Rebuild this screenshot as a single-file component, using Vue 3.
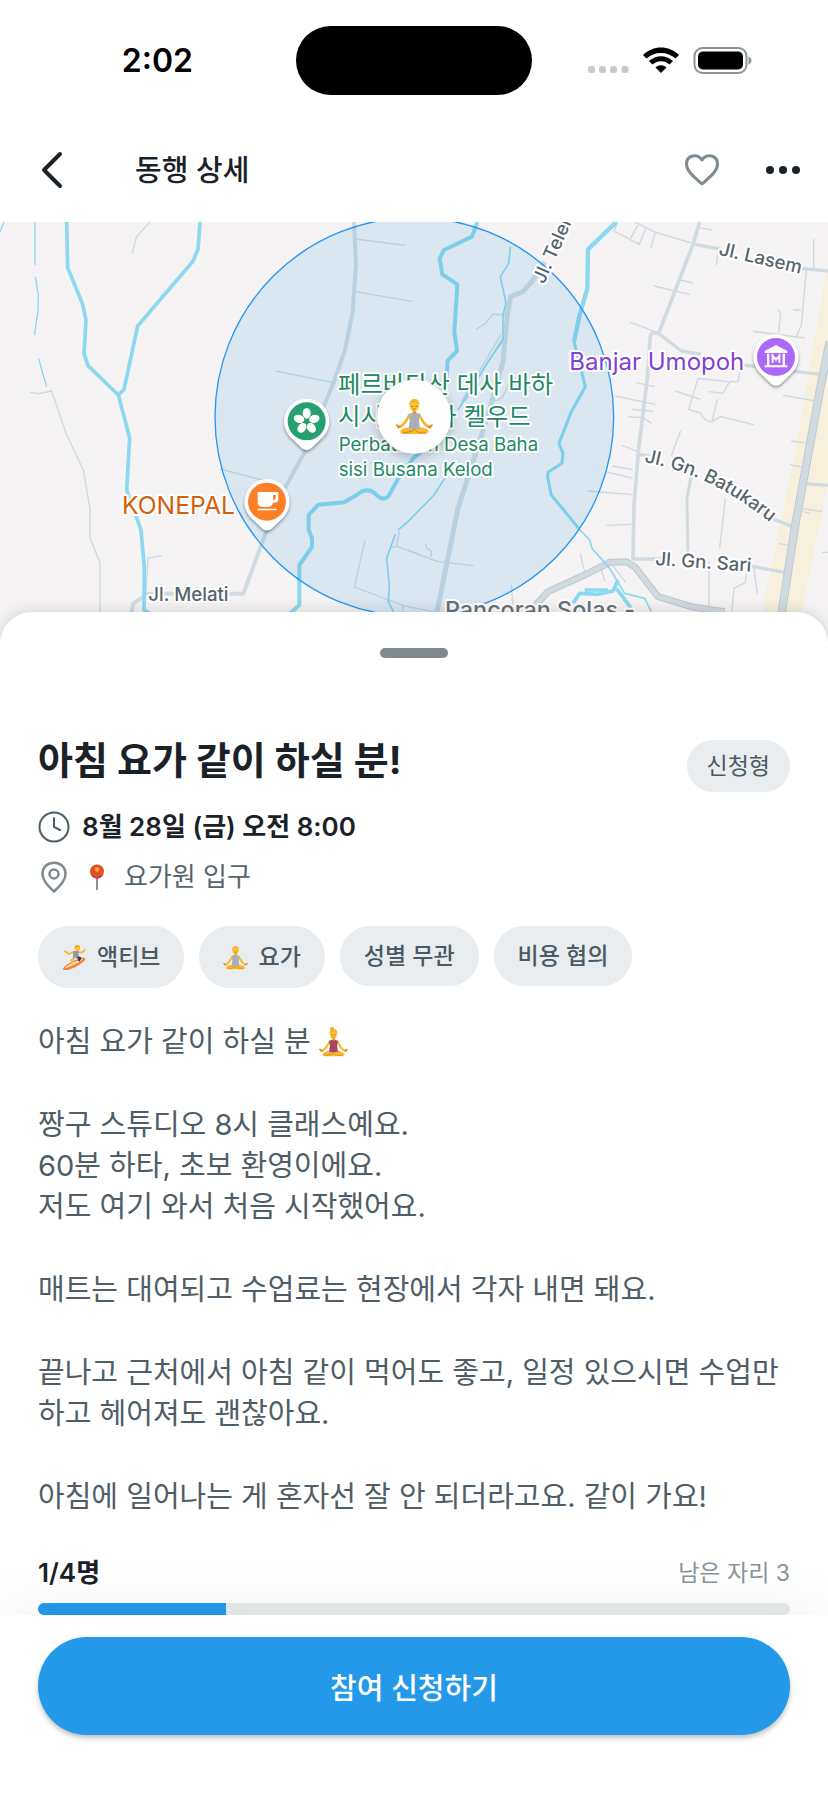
<template>
  <div class="page">
    <svg class="sprite" aria-hidden="true">
      <symbol id="yoga" viewBox="0 0 36 36">
        <path d="M13.500 16.500 C11 20 10 24 6 27 L2.500 28.500 M22.500 16.500 C25 20 26 24 30 27 L33.500 28.500" fill="none" stroke="#f7b62d" stroke-width="2.600" stroke-linecap="round" stroke-linejoin="round" />
        <path d="M1 26.500 L4 28.500 M35 26.500 L32 28.500" stroke="#d9822b" stroke-width="1.600" stroke-linecap="round" />
        <path d="M7 30 C11 28 14 28.500 18 30 C22 28.500 25 28 29 30 C33 31.500 32 35 28 35 H8 C4 35 3 31.500 7 30Z" fill="#f7b62d" />
        <path d="M7 34 C13 33.500 16 32.500 19 30.500 M29 34 C25 34 22 33.500 20 32.500" fill="none" stroke="#d88a18" stroke-width="1" />
        <rect x="16.400" y="11" width="3.400" height="6" fill="#e59a1c" />
        <path d="M12.500 16 L16 14.500 Q18 17 20 14.500 L23.500 16 L22.500 22 L23.500 29.500 Q18 31 12.500 29.500 L13.500 22Z" fill="currentColor" />
        <ellipse cx="18" cy="7.600" rx="4.600" ry="5.800" fill="#fbc534" />
        <path d="M13.200 7 C12.500 0 23.500 -1 22.800 7 C21.500 4 16 3 13.200 7Z" fill="#f7b03a" />
        <path d="M15 8.500h2 M19 8.500h2" stroke="#8a5a12" stroke-width=".8" />
        <path d="M16.800 11h2.400" stroke="#c5481e" stroke-width=".9" />
      </symbol>
      <symbol id="surf" viewBox="0 0 36 36">
        <ellipse cx="17.500" cy="27.500" rx="18" ry="4.600" transform="rotate(-27 17.500 27.500)" fill="#f58234" />
        <ellipse cx="17" cy="26.800" rx="14" ry="1.600" transform="rotate(-27 17 26.800)" fill="#fde0c4" />
        <path d="M18 18 L14 22 L14 27" fill="none" stroke="#f7b62d" stroke-width="3" stroke-linejoin="round" />
        <path d="M21 17 L26 19 L24 23" fill="none" stroke="#333b44" stroke-width="3.400" stroke-linejoin="round" />
        <path d="M17 10 L10 13 L4 9 M23 10 L29 11 L33 7" fill="none" stroke="#f7b62d" stroke-width="2.600" stroke-linecap="round" stroke-linejoin="round" />
        <path d="M16 9 L24 8 L24 17 L16 19Z" fill="#8f9aa6" />
        <circle cx="22" cy="4.500" r="4" fill="#fbc534" />
        <path d="M18 4 C18 -1 26 -1 26 4 C24 2 21 2 18 4Z" fill="#e79a20" />
      </symbol>
      <symbol id="map-pin" viewBox="-75 -75 150 175">
        <path d="M-68 0 A68 68 0 1 1 68 0 C68 25 55 42 42 54 L14 81 Q0 92 -14 81 L-42 54 C-55 42 -68 25 -68 0Z" fill="#fff" />
        <circle r="57" fill="currentColor" />
      </symbol>
    </svg>

    <div class="status">
      <span class="clock">2:02</span>
      <span class="island"></span>
      <svg class="signals" viewBox="0 0 164 28" aria-hidden="true">
        <g fill="#c5cbce">
          <rect x="0" y="19" width="7" height="7" rx="2.500" />
          <rect x="11" y="19" width="7" height="7" rx="2.500" />
          <rect x="22" y="19" width="7" height="7" rx="2.500" />
          <rect x="33.500" y="19" width="7" height="7" rx="2.500" />
        </g>
        <path d="M55 8 C65 -2 81 -2 91 8 L87.500 11.500 C80 4 66 4 58.500 11.500Z" />
        <path d="M61 14 C68 7.500 78 7.500 85 14 L81.500 17.500 C77 13 69 13 64.500 17.500Z" />
        <path d="M67.500 20.500 C70.500 17.500 75.500 17.500 78.500 20.500 L73 26Z" />
        <rect x="106.500" y="1" width="52" height="25" rx="8" fill="none" stroke="#8b9499" stroke-width="2" />
        <rect x="110" y="4.500" width="45" height="18" rx="5" />
        <path d="M160.500 9.500 C164.500 11 164.500 16 160.500 17.500Z" fill="#8b9499" />
      </svg>
    </div>

    <header class="topbar">
      <button class="icon-btn" aria-label="뒤로">
        <svg width="24" height="40" viewBox="0 0 24 40"><path d="M20 4 L4 20 L20 36" fill="none" stroke="#1a2228" stroke-width="4" stroke-linecap="round" stroke-linejoin="round" /></svg>
      </button>
      <h1 class="topbar-title">동행 상세</h1>
      <div class="actions">
        <button class="icon-btn" aria-label="찜하기">
          <svg width="36" height="34" viewBox="0 0 36 34"><path d="M18 31 C9 23 2.500 18 2.500 11 C2.500 2.500 13 -.5 18 7 C23 -.5 33.500 2.500 33.500 11 C33.500 18 27 23 18 31Z" fill="none" stroke="#7f8a91" stroke-width="3" stroke-linejoin="round" /></svg>
        </button>
        <button class="icon-btn" aria-label="더보기">
          <svg width="36" height="10" viewBox="0 0 36 10" fill="#1a2228"><circle cx="5" cy="5" r="4" /><circle cx="18" cy="5" r="4" /><circle cx="31" cy="5" r="4" /></svg>
        </button>
      </div>
    </header>

    <svg class="map" viewBox="0 0 2484 1290" preserveAspectRatio="xMidYMin slice" role="img" aria-label="모임 장소 지도">
      <rect width="2484" height="1290" fill="#f5f3f4" />

      <!-- west half -->
      <g transform="translate(0 -21)" fill="none" stroke-linejoin="round">
        <g stroke="#ccd9e0" stroke-width="4">
          <path d="M450 21 L409 66 L397 116" />
          <path d="M90 532 L118 536 L155 528 L198 655 L250 765 L270 880 V968 L300 1043 V1200" />
          <path d="M1065 72 L1216 91 M1065 230 L1237 259 M827 468 L1000 503 M660 762 L800 798" />
          <path d="M438 1135 L444 1030 L486 1021" />
          <path d="M1095 976 L1063 1116 L1210 1172 L1400 1210 M1175 996 L1190 994 L1260 1018 M1190 994 L1198 948" />
          <path d="M1208 1172 V1210" />
        </g>
        <path d="M1062 21 L1068 150 L1058 290 L1035 405 L1000 505 L920 700 L860 810 L795 960 L730 1136 H445 L400 1165 L388 1220" stroke="#d0dae1" stroke-width="12" />
        <g stroke="#8bd8f0">
          <path d="M200 21 L203 158 L247 265 L258 315 L252 416 L264 452 L355 540 L372 523 L413 333 L578 140 L594 103 L600 21" stroke-width="11" />
          <path d="M355 540 L389 668 L380 826 L423 945 L433 1060 L432 1185 L450 1195" stroke-width="11" />
          <path d="M12 21 L0 50 M105 21 V150 M106 185 L115 240 L114 290 L108 325 L104 360 M116 430 L128 475 L140 515" stroke-width="4" />
          <path d="M1330 650 L1240 730 L1195 790 L1165 845 Q1145 860 1125 835 Q1100 815 1070 840 L1032 862 L955 869 L926 900 V945 L936 970 V996 L898 1050 V1170 L865 1200" stroke-width="12" />
          <path d="M1186 958 L1160 1030 L1168 1110 L1165 1160 L1180 1190" stroke-width="5" />
        </g>
      </g>

      <!-- east half -->
      <g transform="translate(1224 -21)" fill="none" stroke-linejoin="round">
        <path d="M1254 175 H1310 V560 L1180 1195 L1190 1320 H1060 L1070 1150 L1160 720Z" fill="#f6f0dd" />
        <g stroke="#ccd9e0" stroke-width="4">
          <path d="M630 21 L618 48 L694 88 L714 38 M668 70 L690 30 M680 21 L742 52 L850 84 M742 52 L729 98 M872 38 L911 45" />
          <path d="M818 195 L854 204 M738 213 L847 239 M667 322 L755 355 M1217 72 V165 M1195 165 L1180 330 L1165 365 M1155 285 H1180 M1035 349 L1190 369 M1110 283 L1118 295 L1112 353 M925 150 L930 110" />
          <path d="M1000 450 L990 500 L965 500 L945 535 L903 530 M960 500 L870 490 L842 584 L878 594 Q888 620 912 620 L938 605 L1037 629 M912 620 L928 553 M802 528 L877 553" />
          <path d="M686 503 L740 515 M620 543 L742 568 M672 583 L735 588 M660 605 L705 608 L730 625 M640 690 L690 710 M612 753 L675 764 M598 771 L675 790 M538 828 L675 839 M595 931 L670 928" />
          <path d="M818 647 L790 722 M952 850 L935 1000 M903 1040 V1200 M970 1200 L978 1120 L1012 1102 L1018 1050 M1038 1060 L1048 1136 M1125 541 L1225 558 M1150 678 L1205 686 M1145 749 L1190 758 M1185 881 L1242 889 M1185 890 L1206 895 M1113 986 L1150 992 M1243 1012 H1270" />
          <path d="M205 342 L233 325 L255 297 L290 300 M0 1007 L90 1040 L197 1052 M52 988 L56 1000 L70 1008 V1026 M310 1110 L315 1170 M518 1015 L522 1040 L530 1070 M575 1045 L590 1098 M605 1040 L653 1102" />
          <path d="M278 360 L160 560 M283 370 L170 560 M245 555 Q285 570 303 500" />
        </g>
        <g stroke="#d0dae1">
          <path d="M410 140 L375 195 L345 230 L308 245 L298 300 L285 440 L240 600 L150 880 L85 1200" stroke-width="15" />
          <path d="M875 21 L855 88 L752 355 L735 352 L727 362 L718 490 L692 700 L678 870 L675 1035" stroke-width="11" />
          <path d="M752 355 L820 408 L880 418 M860 88 L935 102 M1175 160 L1260 168 M1005 450 L1235 478 M690 718 L725 722 M1190 806 L1260 811 M1060 898 L1160 937 M675 1032 H760 M1020 1052 L1130 1072" stroke-width="10" />
          <path d="M850 780 L837 850 L840 1020" stroke-width="9" />
          <path d="M370 1185 L420 1130 L530 1080 L605 1042 L655 1040 L680 1055 L750 1145 L850 1175 L950 1190" stroke="#c0c7ca" stroke-width="21" />
          <path d="M370 1185 L420 1130 L530 1080 L605 1042 L655 1040 L680 1055 L750 1145 L850 1175 L950 1190" stroke-width="15" />
          <path d="M1265 380 L1235 530 L1160 940 L1120 1200 L1110 1320" stroke="#bcc5ca" stroke-width="25" />
          <path d="M1265 380 L1235 530 L1160 940 L1120 1200 L1110 1320" stroke-width="20" />
        </g>
        <g stroke="#8bd8f0">
          <path d="M208 21 L192 65 L108 105 L95 130 L103 178 L148 208 L139 350 L147 408 L119 437 L115 500" stroke-width="12" />
          <path d="M625 21 L540 103 L538 220 L515 300 L498 380" stroke-width="13" />
          <path d="M498 380 L532 515 L490 590 L453 685 L465 715 L462 745 L420 772 L419 788 L430 840 L512 940" stroke-width="9" />
          <path d="M512 940 L545 975 L552 1000 L605 1060 L650 1135 L710 1150 L730 1190" stroke-width="5" />
          <path d="M495 1165 L515 1135 L570 1138 L615 1128 L630 1095 M625 1120 L670 1180 M530 1125 L600 1125" stroke-width="11" />
          <path d="M307 95 L302 145 L277 185 L294 265 L285 300 L285 375 L240 440 L150 585 M110 790 L78 840 L0 920 L-30 945" stroke-width="5" />
        </g>
      </g>

      <circle cx="1243" cy="585" r="598" fill="#1c8fd2" fill-opacity=".12" stroke="#2196f3" stroke-width="4" />

      <g class="roads">
        <text x="445" y="1136">Jl. Melati</text>
        <text transform="translate(2154 98) rotate(13)">Jl. Lasem</text>
        <text transform="translate(1632 188) rotate(-66)">Jl. Teler</text>
        <path id="batukaru" d="M1932 720 Q2060 745 2160 800 T2370 950" fill="none" stroke="none" />
        <text><textPath href="#batukaru">Jl. Gn. Batukaru</textPath></text>
        <text transform="translate(1965 1029) rotate(4)">Jl. Gn. Sari</text>
        <text class="area" x="1335" y="1188">Pancoran Solas -</text>
      </g>
      <g class="places">
        <text class="food" x="366" y="877">KONEPAL</text>
        <text class="museum" x="1708" y="443">Banjar Umopoh</text>
        <g class="park">
          <text x="1014" y="514">페르바타산 데사 바하</text>
          <text x="1014" y="609">시시 부사나 켈우드</text>
          <text class="latin" x="1016" y="688">Perbatasan Desa Baha</text>
          <text class="latin" x="1016" y="763">sisi Busana Kelod</text>
        </g>
      </g>

      <g class="pin park" transform="translate(920 598)">
        <use href="#map-pin" x="-75" y="-75" width="150" height="175" />
        <g fill="#fff">
          <ellipse v-for="n in 5" :key="n" cx="0" cy="-24" rx="12" ry="16" :transform="`rotate(${n * 72})`" />
        </g>
      </g>
      <g class="pin cafe" transform="translate(801 839)">
        <use href="#map-pin" x="-75" y="-75" width="150" height="175" />
        <path d="M-28 -29 H34 V-9 Q34 4 18 4 Q14 16 2 16 H-14 Q-28 16 -28 2Z M18 -20 V-5 Q26 -5 26 -11 V-20Z M-28 21 H29 V26 H-28Z" fill="#fff" fill-rule="evenodd" />
      </g>
      <g class="pin gallery" transform="translate(2328 405)">
        <use href="#map-pin" x="-75" y="-75" width="150" height="175" />
        <path d="M0 -36 L34 -18 V-12 H-34 V-18Z M-27 -10 H-20 V25 H-27Z M20 -10 H27 V25 H20Z M-34 25 H34 V31 H-34Z" fill="#fff" />
        <path d="M-10 17 V-4 L0 8 L10 -4 V17" fill="none" stroke="#fff" stroke-width="6" />
      </g>
      <g class="spot">
        <circle cx="1242" cy="584" r="111" fill="#fff" />
        <use href="#yoga" x="1187" y="527" width="112" height="112" />
      </g>
    </svg>

    <main class="sheet">
      <div class="handle"></div>

      <div class="title-row">
        <h2 class="title">아침 요가 같이 하실 분!</h2>
        <span class="badge">신청형</span>
      </div>

      <div class="meta when">
        <svg width="32" height="32" viewBox="0 0 32 32" fill="none" stroke="#4f5d66" stroke-width="2" stroke-linecap="round"><circle cx="16" cy="16" r="14.500" /><path d="M16 7 V16 L22 19" /></svg>
        <span>8월 28일 (금) 오전 8:00</span>
      </div>
      <div class="meta where">
        <svg width="32" height="32" viewBox="0 0 32 32" fill="none" stroke="#7f8a91" stroke-width="2.500"><path d="M16 30.500 C12 27 4.500 20 4.500 13 C4.500 -2 27.500 -2 27.500 13 C27.500 20 20 27 16 30.500Z" stroke-linejoin="round" /><circle cx="16" cy="13" r="4.500" /></svg>
        <svg class="round-pin" width="28" height="28" viewBox="0 0 28 28"><path d="M14 13 V27" stroke="#87949d" stroke-width="2" /><circle cx="14" cy="8.500" r="7" fill="#e2501c" /><path d="M7.500 11 Q14 17 20.500 11 Q18 15.500 14 15.500 Q10 15.500 7.500 11Z" fill="#c03a5e" /><circle cx="14" cy="6.500" r="2.200" fill="#fba24e" /></svg>
        <span>요가원 입구</span>
      </div>

      <ul class="chips">
        <li v-for="tag in tags" :key="tag.label" class="chip" :class="{ 'with-icon': tag.icon }">
          <svg v-if="tag.icon" class="chip-icon"><use :href="tag.icon" /></svg>
          {{ tag.label }}
        </li>
      </ul>

      <div class="description">
        <p>아침 요가 같이 하실 분 <svg class="inline-icon"><use href="#yoga" /><circle cx="13" cy="1" r="2" fill="#f5a623" /></svg></p>
        <p v-for="text in paragraphs" :key="text">{{ text }}</p>
      </div>

      <div class="seats">
        <strong>{{ joined }}/{{ capacity }}명</strong>
        <span>남은 자리 {{ capacity - joined }}</span>
      </div>
      <div class="bar">
        <div class="bar-fill" :style="{ width: (joined / capacity) * 100 + '%' }"></div>
      </div>
    </main>

    <footer class="footer">
      <button class="apply">참여 신청하기</button>
    </footer>
  </div>
</template>

<script setup>
const joined = 1;
const capacity = 4;

const tags = [
  { label: '액티브', icon: '#surf' },
  { label: '요가', icon: '#yoga' },
  { label: '성별 무관' },
  { label: '비용 협의' },
];

const paragraphs = [
  '짱구 스튜디오 8시 클래스예요.\n60분 하타, 초보 환영이에요.\n저도 여기 와서 처음 시작했어요.',
  '매트는 대여되고 수업료는 현장에서 각자 내면 돼요.',
  '끝나고 근처에서 아침 같이 먹어도 좋고, 일정 있으시면 수업만 하고 헤어져도 괜찮아요.',
  '아침에 일어나는 게 혼자선 잘 안 되더라고요. 같이 가요!',
];
</script>

<style>
body { background: #fff; }
</style>

<style scoped>
.page {
  display: flex;
  flex-direction: column;
  min-height: 100vh;
  background: #fff;
  color: #1a2228;
  font-family: Inter, "Noto Sans CJK KR", sans-serif;
}
.sprite { position: absolute; width: 0; height: 0; }
button { border: none; background: none; padding: 0; font: inherit; cursor: pointer; }

.status {
  display: grid;
  grid-template-columns: 1fr 236px 1fr;
  align-items: center;
  padding: 26px 0 23px;
}
.clock {
  justify-self: end;
  padding-right: 103px;
  font-size: 32px;
  line-height: 40px;
  font-weight: 600;
  color: #000;
}
.island { height: 69px; border-radius: 35px; background: #000; }
.signals { justify-self: end; width: 164px; height: 28px; margin-right: 76px; }

.topbar {
  display: flex;
  align-items: center;
  height: 104px;
  padding: 0 21px 0 28px;
}
.icon-btn { display: grid; place-items: center; width: 48px; height: 48px; }
.topbar-title { margin: 0 0 0 59px; font-size: 29px; line-height: 41px; font-weight: 500; }
.actions { display: flex; gap: 33px; margin-left: auto; }

.map { display: block; width: 100%; height: 430px; }
.map text { stroke: #fff; stroke-width: 12px; stroke-linejoin: round; paint-order: stroke; }
.roads text { font-size: 56px; font-weight: 500; fill: #56646d; }
.roads .area { font-size: 70px; fill: #66737b; }
.places text { font-size: 73px; }
.places .food { font-size: 74px; fill: #d45f0d; }
.places .museum { font-size: 72px; fill: #8140d1; }
.places .park text { fill: #1e8a63; }
.places .park .latin { font-size: 56px; }
.pin { filter: drop-shadow(0 6px 5px rgba(0,0,0,.35)); }
.pin.park { color: #27a071; }
.pin.cafe { color: #ff7f27; }
.pin.gallery { color: #ac68fb; }
.spot { color: #a9afb8; filter: drop-shadow(0 8px 16px rgba(0,0,0,.25)); }

.sheet {
  position: relative;
  margin-top: -40px;
  padding: 36px 38px 0;
  border-radius: 32px 32px 0 0;
  background: #fff;
  box-shadow: 0 -2px 14px rgba(0,0,0,.12);
}
.handle { width: 68px; height: 10px; margin: 0 auto; border-radius: 5px; background: #7f8990; }
.title-row {
  display: flex;
  justify-content: space-between;
  align-items: flex-start;
  margin-top: 74px;
}
.title { margin: 0; font-size: 38px; line-height: 56px; font-weight: 700; }
.badge {
  margin-top: 8px;
  padding: 0 20px;
  border-radius: 26px;
  background: #e9edf0;
  color: #4a5962;
  font-size: 23px;
  line-height: 52px;
}
.meta { display: flex; align-items: center; line-height: 40px; }
.when { gap: 12px; margin-top: 15px; font-size: 26px; font-weight: 600; }
.where { margin-top: 10px; font-size: 26px; color: #56646d; }
.round-pin { margin: 0 13px 0 13px; }

.chips {
  display: flex;
  flex-wrap: wrap;
  align-items: flex-start;
  gap: 15px;
  margin: 29px 0 0;
  padding: 0;
  list-style: none;
}
.chip {
  display: flex;
  align-items: center;
  gap: 10px;
  padding: 0 24px;
  border-radius: 31px;
  background: #e9edf0;
  color: #4a5962;
  font-size: 23px;
  line-height: 60px;
  font-weight: 500;
}
.chip.with-icon { line-height: 62px; }
.chip-icon { width: 25px; height: 25px; color: #a9afb8; }

.description {
  display: flex;
  flex-direction: column;
  gap: 42px;
  margin-top: 33px;
  font-size: 29px;
  line-height: 41px;
  color: #4f5d66;
}
.description p { margin: 0; white-space: pre-line; word-break: keep-all; }
.inline-icon { width: 29px; height: 29px; overflow: visible; vertical-align: -5px; color: #a8455f; }

.seats {
  display: flex;
  justify-content: space-between;
  align-items: center;
  margin-top: 36px;
  line-height: 40px;
}
.seats strong { font-size: 26px; font-weight: 600; }
.seats span { font-size: 23px; color: #8a949a; }
.bar { height: 12px; margin-top: 10px; border-radius: 6px; background: #e8ebec; overflow: hidden; }
.bar-fill { height: 100%; background: #2499ea; }

.footer {
  position: sticky;
  bottom: 0;
  margin-top: auto;
  padding: 22px 38px 64px;
  background: #fff;
  box-shadow: 0 -8px 60px rgba(0,0,0,.05);
}
.apply {
  display: block;
  width: 100%;
  height: 98px;
  border-radius: 49px;
  background: #2499ea;
  color: #fff;
  font-size: 29px;
  font-weight: 500;
  box-shadow: 0 3px 5px rgba(0,0,0,.25);
}
</style>
